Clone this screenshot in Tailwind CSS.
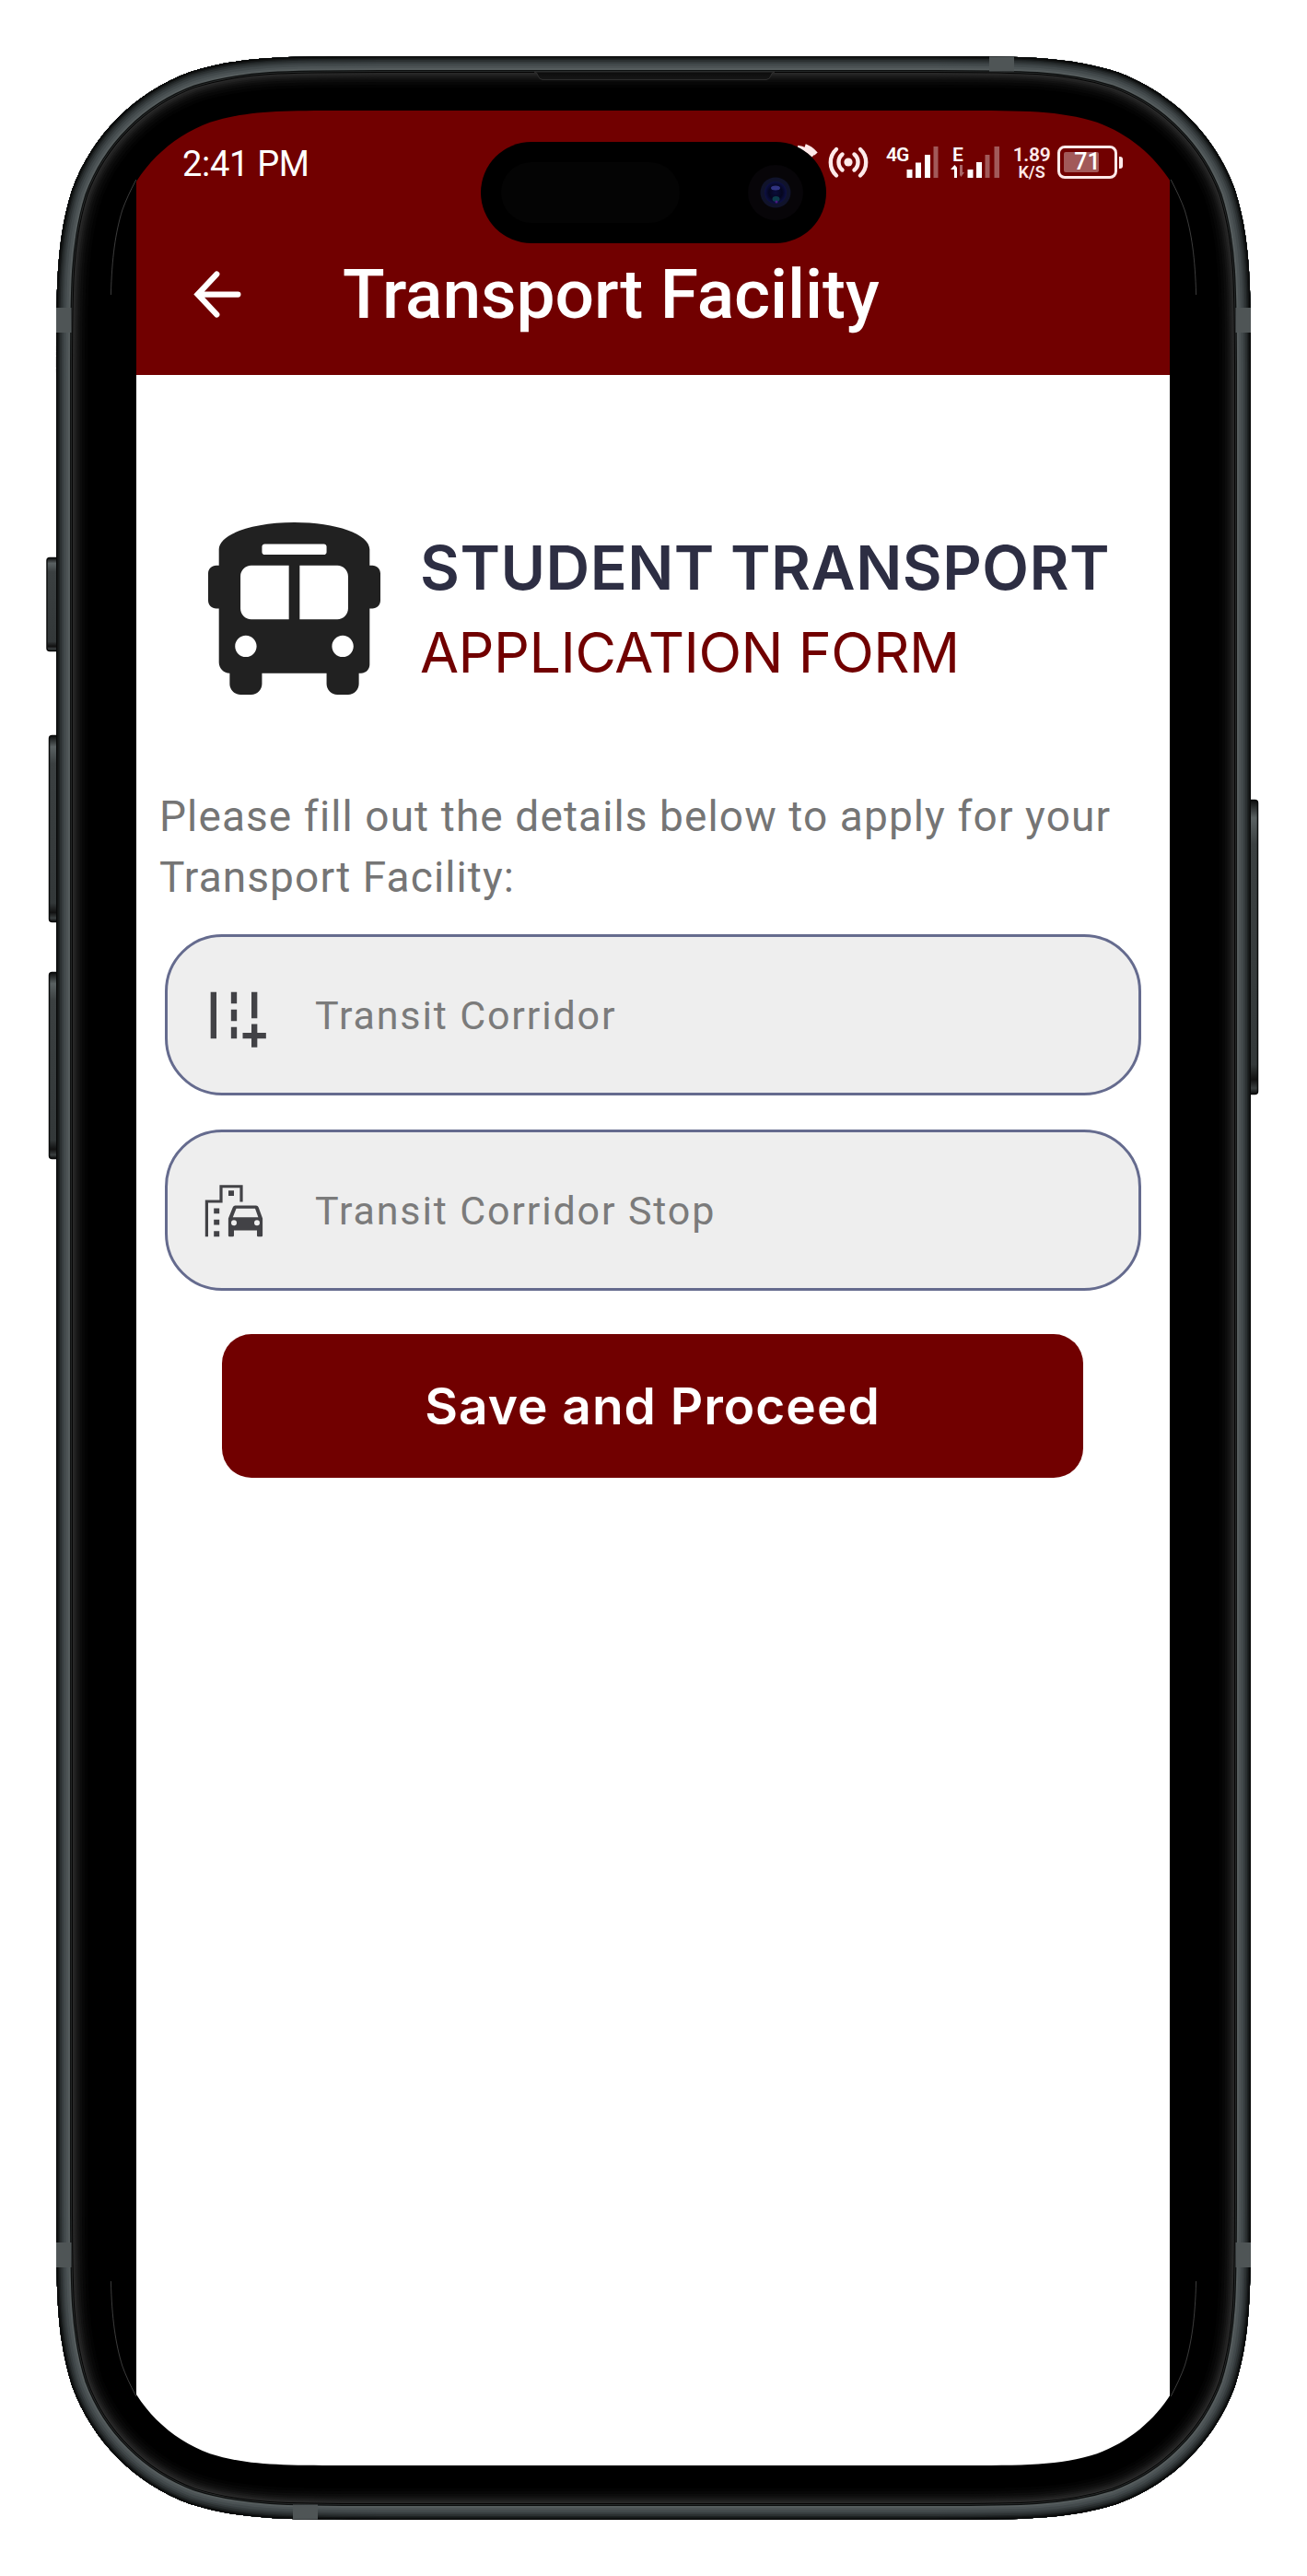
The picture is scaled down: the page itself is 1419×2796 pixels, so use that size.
<!DOCTYPE html>
<html lang="en">
<head>
<meta charset="utf-8">
<title>Transport Facility</title>
<script src="https://cdn.jsdelivr.net/npm/@tailwindcss/browser@4"></script>
</head>
<body class="bg-white">
<div class="relative w-[1419px] h-[2796px] overflow-hidden bg-white pt-[120px] pl-[148px]">

  <!-- App screen -->
  <main class="w-[1122px] h-[2556px] bg-white font-[Roboto,sans-serif] flex flex-col">
    <header class="h-[287px] bg-[#710000] text-white flex flex-col">
      <div class="h-[132px] pt-[36px] pl-[50px] pr-[51px] flex items-start justify-between">
        <span class="text-[38px] leading-[42px] tracking-[-0.3px] mt-[0.5px]">2:41 PM</span>
        <div class="flex items-start">
          <svg class="w-[42px] h-[42px] mr-[11px]" viewBox="846 156 42 42" fill="none" stroke="#ffeaea" stroke-width="4.500"><path d="M866 160q9 1 17 9M874 158.500q6 2 12 8.500"/></svg>
          <svg class="w-[44px] h-[42px] mr-[19px]" viewBox="899 156 44 42" fill="none" stroke="#ffeaea" stroke-width="4.4" stroke-linecap="round"><circle cx="921" cy="176" r="4.6" fill="#ffeaea" stroke="none"/><path d="M914.5 167.500a11 11 0 0 0 0 17M927.500 167.500a11 11 0 0 1 0 17M908 162a19.500 19.500 0 0 0 0 28.500M934 162a19.500 19.500 0 0 1 0 28.500"/></svg>
          <span class="text-[21px] leading-[20px] font-semibold w-[24px] mt-[2px] tracking-[-1px]">4G</span>
          <svg class="w-[35px] h-[42px] mr-[12px] ml-[-2px]" viewBox="984 156 35 42" fill="#fff"><rect x="984.500" y="184" width="6" height="9"/><rect x="994" y="176.500" width="6" height="16.500"/><rect x="1004" y="168" width="6" height="25"/><rect x="1013.500" y="159" width="5" height="34" opacity=".35"/></svg>
          <div class="w-[18px] h-[42px] flex flex-col items-center">
            <span class="text-[21px] leading-[20px] font-semibold mt-[2px]">E</span>
            <svg class="w-[18px] h-[14px] mt-[1px]" viewBox="0 0 18 14" fill="#fff"><path d="M5.500 0 8 3v11H5V5H1z"/><path d="M11 0h3v8l2 0-3.500 5-1.500-2z" opacity=".4"/></svg>
          </div>
          <svg class="w-[36px] h-[42px] mr-[14px] ml-[1px]" viewBox="1050 156 36 42" fill="#fff"><rect x="1050.500" y="184" width="6" height="9"/><rect x="1060" y="176" width="6" height="17"/><g opacity=".35"><rect x="1069.500" y="168" width="5" height="25"/><rect x="1079.500" y="159" width="5.500" height="34"/></g></svg>
          <div class="w-[40px] h-[42px] flex flex-col items-center font-semibold mr-[8px] text-[#ffeaea]">
            <span class="text-[21px] leading-[20px] mt-[2px] tracking-[-0.3px]">1.89</span>
            <span class="text-[18px] leading-[16px] mt-[1px]">K/S</span>
          </div>
          <div class="flex items-center h-[36px] mt-[2px]">
            <div class="relative w-[65px] h-[36px] border-[3px] border-[#ffeaea] rounded-[8px] flex items-center justify-center">
              <div class="absolute left-[4px] top-[4px] w-[38px] h-[22px] bg-white/35 rounded-[2px]"></div>
              <span class="relative text-[25px] leading-[30px] font-medium">71</span>
            </div>
            <div class="w-[4px] h-[13px] ml-[2px] rounded-r-[3px] bg-[#ffeaea]"></div>
          </div>
        </div>
      </div>
      <div class="flex items-center h-[134px] pl-[51px]">
        <svg class="w-[75px] h-[75px]" viewBox="0 0 24 24" fill="none" stroke="#fff" stroke-width="2" stroke-linecap="round" stroke-linejoin="miter"><path d="M19 12H5.700M11.600 5 5 12l6.600 7"/></svg>
        <h1 class="ml-[98px] text-[75px] leading-[88px] font-medium tracking-[-0.1px] whitespace-nowrap">Transport Facility</h1>
      </div>
    </header>

    <section class="flex items-start pl-[78px] pt-[160px]">
      <svg class="w-[187px] h-[187px]" viewBox="0 0 512 512" fill="#212121"><path d="M488 128h-8V80c0-44.800-99.200-80-224-80S32 35.200 32 80v48h-8c-13.250 0-24 10.740-24 24v80c0 13.250 10.750 24 24 24h8v160c0 17.670 14.330 32 32 32v32c0 17.670 14.330 32 32 32h32c17.670 0 32-14.330 32-32v-32h192v32c0 17.670 14.330 32 32 32h32c17.670 0 32-14.330 32-32v-32h6.400c16 0 25.600-12.800 25.600-25.600V256h8c13.250 0 24-10.750 24-24v-80c0-13.260-10.750-24-24-24zM160 72c0-4.420 3.580-8 8-8h176c4.420 0 8 3.580 8 8v16c0 4.420-3.580 8-8 8H168c-4.420 0-8-3.580-8-8V72zm-48 328c-17.670 0-32-14.330-32-32s14.330-32 32-32 32 14.330 32 32-14.330 32-32 32zm128-112H128c-17.670 0-32-14.330-32-32v-96c0-17.670 14.330-32 32-32h112v160zm32 0V128h112c17.670 0 32 14.330 32 32v96c0 17.670-14.330 32-32 32H272zm128 112c-17.670 0-32-14.330-32-32s14.330-32 32-32 32 14.330 32 32-14.330 32-32 32z"/></svg>
      <div class="ml-[43px] pt-[3px] font-[Inter,sans-serif] whitespace-nowrap">
        <h2 class="text-[66px] leading-[92px] font-semibold tracking-[0.500px] text-[#2d2e43]">STUDENT TRANSPORT</h2>
        <p class="text-[61px] leading-[92px] tracking-[-0.500px] text-[#710000]">APPLICATION FORM</p>
      </div>
    </section>

    <p class="mt-[100px] pl-[25px] text-[46px] leading-[65.500px] tracking-[1.100px] text-[#757575]">Please fill out the details below to apply for your<br>Transport Facility:</p>

    <div class="mt-[29px] ml-[31px] w-[1060px] flex flex-col gap-[37px]">
      <div class="h-[175px] border-[3px] border-[#656b8e] bg-[#eee] rounded-[62px] flex items-center pl-[34px]">
        <svg class="w-[76px] h-[76px]" viewBox="0 0 24 24" fill="#424246"><path d="M20 18v-3h-2v3h-3v2h3v3h2v-3h3v-2zM20 4h-2v9h2zM6 4H4v16h2zM11 4h2v4h-2zM11 10h2v4h-2zM11 16h2v4h-2z"/></svg>
        <span class="ml-[50px] text-[43px] leading-[50px] tracking-[1.850px] text-[#7b7b7b]">Transit Corridor</span>
      </div>
      <div class="h-[175px] border-[3px] border-[#656b8e] bg-[#eee] rounded-[62px] flex items-center pl-[34px]">
        <svg class="w-[76px] h-[76px]" viewBox="216 1275.500 76 76" fill="#424246"><path d="M222.800 1341.700v-39.700h15.600v-16.300h25.200v18.300h-3.200v-15.300h-18.800v16.300h-15.600v36.700z"/><path d="M248 1291.800h6v5.800h-6zM232.200 1311h6v5.800h-6zM232.200 1323.300h6v5.800h-6zM232.200 1335.700h6v6h-6z"/><path fill-rule="evenodd" d="M255.500 1308h22.500q2 0 2.700 2l4.400 12v18.500q0 1.200-1.200 1.200h-3.700q-1.200 0-1.200-1.200v-5.500h-25v5.500q0 1.200-1.200 1.200h-3.700q-1.200 0-1.200-1.200V1322l4.800-12q.8-2 2.800-2zm1 3.200-3.700 9.600h27.600l-3.400-9.600zM254 1323.800a3 3 0 1 0 0 6 3 3 0 0 0 0-6zm25 0a3 3 0 1 0 0 6 3 3 0 0 0 0-6z"/></svg>
        <span class="ml-[50px] text-[43px] leading-[50px] tracking-[1.850px] text-[#7b7b7b]">Transit Corridor Stop</span>
      </div>
    </div>

    <button class="mt-[47px] ml-[93px] w-[935px] h-[156px] rounded-[32px] bg-[#710000] text-white font-[Inter,sans-serif] font-semibold text-[55px] tracking-[1px]">Save and Proceed</button>
  </main>

  <!-- Phone frame -->
  <svg class="absolute inset-0 w-[1419px] h-[2796px] pointer-events-none" viewBox="0 0 1419 2796">
    <defs>
      <path id="outer" d="M61 412.600c0-101.200 0-151.900 17.200-206.400c21.700-59.500 68.500-106.300 128-128c54.500-17.200 105.200-17.200 206.400-17.200H1006.400c101.200 0 151.900 0 206.400 17.200c59.500 21.700 106.300 68.500 128 128c17.200 54.500 17.200 105.200 17.200 206.400V2383.400c0 101.200 0 151.900-17.200 206.400c-21.700 59.500-68.500 106.300-128 128c-54.500 17.200-105.200 17.200-206.400 17.200H412.600c-101.200 0-151.900 0-206.400-17.200c-59.500-21.700-106.300-68.500-128-128c-17.200-54.500-17.200-105.200-17.200-206.400z"/>
      <clipPath id="body"><use href="#outer"/></clipPath>
      <linearGradient id="side" x1="0" y1="0" x2="0" y2="1"><stop offset="0" stop-color="#0c0d0d"/><stop offset=".06" stop-color="#5a6162"/><stop offset=".15" stop-color="#3b4041"/><stop offset=".9" stop-color="#333839"/><stop offset=".95" stop-color="#111"/><stop offset=".98" stop-color="#3a3f40"/><stop offset="1" stop-color="#0c0d0d"/></linearGradient>
      <linearGradient id="notch" x1="0" y1="0" x2="0" y2="1"><stop offset="0" stop-color="#0c0c0c"/><stop offset="1" stop-color="#161616"/></linearGradient>
      <radialGradient id="lens"><stop offset="0" stop-color="#0a0d3a"/><stop offset=".6" stop-color="#05061f"/><stop offset="1" stop-color="#0d1045"/></radialGradient>
    </defs>
    <g fill="url(#side)" stroke="#0b0c0c" stroke-width="1.500">
      <rect x="51" y="605.500" width="14" height="101" rx="3"/>
      <rect x="53.500" y="798.500" width="12" height="202" rx="3"/>
      <rect x="53.500" y="1055.500" width="12" height="202" rx="3"/>
      <rect x="1352" y="868.500" width="13.500" height="319" rx="3"/>
    </g>
    <path fill-rule="evenodd" d="M61 412.600c0-101.200 0-151.900 17.200-206.400c21.700-59.500 68.500-106.300 128-128c54.500-17.200 105.200-17.200 206.400-17.200H1006.400c101.200 0 151.900 0 206.400 17.200c59.500 21.700 106.300 68.500 128 128c17.200 54.500 17.200 105.200 17.200 206.400V2383.400c0 101.200 0 151.900-17.200 206.400c-21.700 59.500-68.500 106.300-128 128c-54.500 17.200-105.200 17.200-206.400 17.200H412.600c-101.200 0-151.900 0-206.400-17.200c-59.500-21.700-106.300-68.500-128-128c-17.200-54.500-17.200-105.200-17.200-206.400zM120 381.400c0-75.300 0-112.900 12.800-153.400c16.100-44.200 51-79.100 95.200-95.200c40.500-12.800 78.100-12.800 153.400-12.800H1037.600c75.300 0 112.900 0 153.400 12.800c44.200 16.100 79.100 51 95.200 95.200c12.800 40.500 12.800 78.100 12.800 153.400V2414.600c0 75.300 0 112.900-12.800 153.400c-16.100 44.200-51 79.100-95.200 95.200c-40.500 12.800-78.100 12.800-153.400 12.800H381.400c-75.300 0-112.900 0-153.400-12.800c-44.200-16.100-79.100-51-95.200-95.200c-12.800-40.500-12.800-78.100-12.800-153.400z"/>
    <path d="M118 195h30v2406h-30zM1270 195h31v2406h-31z"/>
    <g fill="none" stroke="#6b6b6b" stroke-width=".7" opacity=".8">
      <path d="M120.400 320c1-40 5-68 12.400-92q5-14 15-33M1298.600 320c-1-40-5-68-12.400-92q-5-14-15-33M120.400 2476c1 40 5 68 12.400 92q5 14 15 33M1298.600 2476c-1 40-5 68-12.400 92q-5 14-15 33"/>
    </g>
    <g clip-path="url(#body)" fill="none">
      <use href="#outer" stroke="#030303" stroke-width="68"/>
      <use href="#outer" stroke="#070707" stroke-width="62"/>
      <use href="#outer" stroke="#0c0c0c" stroke-width="56"/>
      <use href="#outer" stroke="#121212" stroke-width="51"/>
      <use href="#outer" stroke="#191919" stroke-width="47"/>
      <use href="#outer" stroke="#212121" stroke-width="43"/>
      <use href="#outer" stroke="#292929" stroke-width="39"/>
      <use href="#outer" stroke="#050505" stroke-width="36"/>
      <use href="#outer" stroke="#2b2e2e" stroke-width="34"/>
      <use href="#outer" stroke="#0e1010" stroke-width="32.500"/>
      <use href="#outer" stroke="#555c5d" stroke-width="30"/>
      <use href="#outer" stroke="#4c5355" stroke-width="26"/>
      <use href="#outer" stroke="#42494b" stroke-width="21"/>
      <use href="#outer" stroke="#373d3f" stroke-width="16"/>
      <use href="#outer" stroke="#2b3031" stroke-width="12"/>
      <use href="#outer" stroke="#1e2223" stroke-width="8"/>
      <use href="#outer" stroke="#121414" stroke-width="5"/>
      <use href="#outer" stroke="#070808" stroke-width="2"/>
    </g>
    <g fill="#4f5556">
      <rect x="61" y="334" width="16.500" height="27"/><rect x="1341.500" y="334" width="16.500" height="27"/>
      <rect x="61" y="2434" width="16.500" height="27"/><rect x="1341.500" y="2434" width="16.500" height="27"/>
      <rect x="1074" y="61.500" width="27" height="16"/><rect x="318" y="2718.500" width="27" height="16"/>
    </g>
    <path d="M580 78q3 0 4 4t5 4.500H832q4-.5 5-4.500t4-4z" fill="url(#notch)" stroke="#333" stroke-width=".8"/>
    <!-- Camera island -->
    <rect x="522" y="154" width="375" height="110" rx="55"/>
    <rect x="544" y="176" width="194" height="66" rx="33" fill="#040404"/>
    <circle cx="842" cy="209" r="30" fill="#070508"/>
    <circle cx="842" cy="209" r="16.500" fill="#10132b"/>
    <circle cx="842" cy="209" r="12" fill="url(#lens)"/>
    <ellipse cx="842" cy="204" rx="5" ry="2.500" fill="#3b3f9a" opacity=".8"/>
    <ellipse cx="842.500" cy="216" rx="4" ry="3" fill="#0d4a55" opacity=".8"/>
    <circle cx="843" cy="219" r="1.500" fill="#4a1a80"/>
  </svg>
</div>
</body>
</html>
